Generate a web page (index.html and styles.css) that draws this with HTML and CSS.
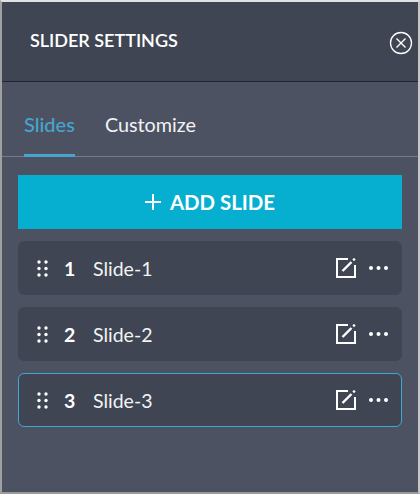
FILE: index.html
```html
<!DOCTYPE html>
<html lang="en">

<head>
    <meta charset="UTF-8">
    <meta name="viewport" content="width=device-width, initial-scale=1.0">
    <title>Slider Settings</title>
    <link rel="stylesheet" href="styles.css">
</head>

<body>
    <div class="panel">
        <header class="panel-header">
            <h1>SLIDER SETTINGS</h1>
            <button class="close-btn" aria-label="Close">
                <svg width="24" height="24" viewBox="0 0 24 24" fill="none" stroke="#fff">
                    <circle cx="12" cy="12" r="10.5" stroke-width="1.3" />
                    <path d="M7.5 7.5l9 9M16.5 7.5l-9 9" stroke-width="1.4" />
                </svg>
            </button>
        </header>
        <nav class="tabs">
            <a class="tab active">Slides</a>
            <a class="tab">Customize</a>
        </nav>
        <div class="content">
            <button class="add-btn">
                <svg width="16" height="16" viewBox="0 0 16 16" stroke="#fff" stroke-width="2">
                    <path d="M8 0v16M0 8h16" />
                </svg>
                ADD SLIDE
            </button>
            <ul class="slides">
                <li class="slide">
                    <svg class="grip" width="11" height="17" viewBox="0 0 11 17" fill="#fff">
                        <circle cx="2" cy="2" r="1.7" /><circle cx="9" cy="2" r="1.7" />
                        <circle cx="2" cy="8.5" r="1.7" /><circle cx="9" cy="8.5" r="1.7" />
                        <circle cx="2" cy="15" r="1.7" /><circle cx="9" cy="15" r="1.7" />
                    </svg>
                    <span class="num">1</span>
                    <span class="name">Slide-1</span>
                    <svg class="edit" width="20" height="20" viewBox="0 0 20 20" fill="none" stroke="#fff">
                        <path d="M12 1H1V19H19V7" stroke-width="2" />
                        <path d="M6.500 13L15.500 4" stroke-width="2.400" />
                        <path d="M17.200 2.300L18.800 0.700" stroke-width="2.400" />
                    </svg>
                    <svg class="more" width="19" height="4" viewBox="0 0 19 4" fill="#fff">
                        <circle cx="2" cy="2" r="2" /><circle cx="9.500" cy="2" r="2" /><circle cx="17" cy="2" r="2" />
                    </svg>
                </li>
                <li class="slide">
                    <svg class="grip" width="11" height="17" viewBox="0 0 11 17" fill="#fff">
                        <circle cx="2" cy="2" r="1.7" /><circle cx="9" cy="2" r="1.7" />
                        <circle cx="2" cy="8.5" r="1.7" /><circle cx="9" cy="8.5" r="1.7" />
                        <circle cx="2" cy="15" r="1.7" /><circle cx="9" cy="15" r="1.7" />
                    </svg>
                    <span class="num">2</span>
                    <span class="name">Slide-2</span>
                    <svg class="edit" width="20" height="20" viewBox="0 0 20 20" fill="none" stroke="#fff">
                        <path d="M12 1H1V19H19V7" stroke-width="2" />
                        <path d="M6.500 13L15.500 4" stroke-width="2.400" />
                        <path d="M17.200 2.300L18.800 0.700" stroke-width="2.400" />
                    </svg>
                    <svg class="more" width="19" height="4" viewBox="0 0 19 4" fill="#fff">
                        <circle cx="2" cy="2" r="2" /><circle cx="9.500" cy="2" r="2" /><circle cx="17" cy="2" r="2" />
                    </svg>
                </li>
                <li class="slide selected">
                    <svg class="grip" width="11" height="17" viewBox="0 0 11 17" fill="#fff">
                        <circle cx="2" cy="2" r="1.7" /><circle cx="9" cy="2" r="1.7" />
                        <circle cx="2" cy="8.5" r="1.7" /><circle cx="9" cy="8.5" r="1.7" />
                        <circle cx="2" cy="15" r="1.7" /><circle cx="9" cy="15" r="1.7" />
                    </svg>
                    <span class="num">3</span>
                    <span class="name">Slide-3</span>
                    <svg class="edit" width="20" height="20" viewBox="0 0 20 20" fill="none" stroke="#fff">
                        <path d="M12 1H1V19H19V7" stroke-width="2" />
                        <path d="M6.500 13L15.500 4" stroke-width="2.400" />
                        <path d="M17.200 2.300L18.800 0.700" stroke-width="2.400" />
                    </svg>
                    <svg class="more" width="19" height="4" viewBox="0 0 19 4" fill="#fff">
                        <circle cx="2" cy="2" r="2" /><circle cx="9.500" cy="2" r="2" /><circle cx="17" cy="2" r="2" />
                    </svg>
                </li>
            </ul>
        </div>
    </div>
</body>

</html>
```

FILE: styles.css
```css
* {
    box-sizing: border-box;
}

html,
body {
    height: 100%;
}

body {
    margin: 0;
    border-style: solid;
    border-width: 2px;
    border-color: #e2e2e2 #c6c6c6 #9a9a9a #a0a0a0;
    font-family: Lato, sans-serif;
    color: white;
    overflow: hidden;
}

.panel {
    height: 100%;
    background-color: #4d5263;
}

.panel-header {
    height: 80px;
    background-color: #3f4552;
    border-bottom: 1px solid #23262f;
    display: flex;
    justify-content: space-between;
    align-items: center;
    padding-left: 28px;
    padding-right: 5px;
}

.panel-header h1 {
    margin: 0 0 4px;
    font-size: 18px;
    font-weight: 600;
}

.close-btn {
    padding: 0;
    margin-top: 3px;
    display: flex;
    background: none;
    border: none;
}

.tabs {
    height: 75px;
    padding-left: 22px;
    display: flex;
    gap: 30px;
    border-bottom: 1px solid #737a94;
}

.tab {
    height: 75px;
    padding-top: 30px;
    font-size: 19.800px;
    line-height: 24px;
    color: #f2f3f5;
}

.tab.active {
    color: #45a5cf;
    font-size: 20px;
    font-weight: 500;
    border-bottom: 3px solid #45a5cf;
}

.content {
    padding: 18px 16px 0;
}

.add-btn {
    width: 100%;
    height: 54px;
    display: flex;
    justify-content: center;
    align-items: center;
    gap: 9px;
    background-color: #06aed0;
    border: none;
    color: white;
    font-family: Lato, sans-serif;
    font-size: 20.400px;
    font-weight: 700;
}

.slides {
    list-style: none;
    margin: 12px 0 0;
    padding: 0;
    display: flex;
    flex-direction: column;
    gap: 12px;
}

.slide {
    height: 54px;
    padding: 0 13px 0 18px;
    display: flex;
    align-items: center;
    background-color: #3f4552;
    border: 1px solid #3f4552;
    border-radius: 6px;
    font-size: 19.500px;
}

.slide.selected {
    border-color: #3fa8d2;
}

.num {
    margin-left: 16px;
    width: 29px;
    font-weight: 700;
}

.name {
    flex: 1;
    color: #f2f3f5;
}

.more {
    margin-left: 13px;
}
```
